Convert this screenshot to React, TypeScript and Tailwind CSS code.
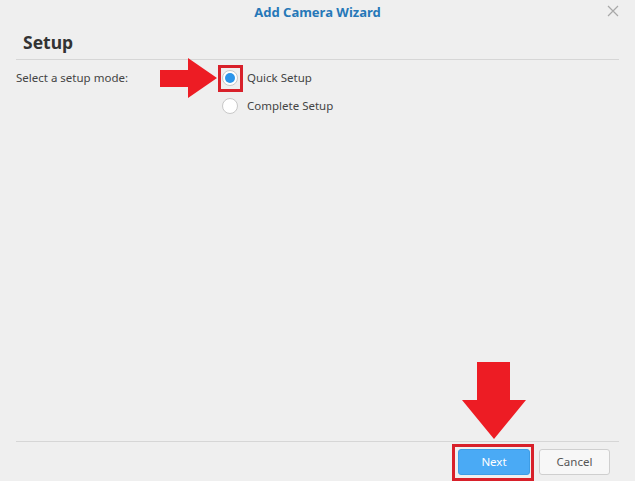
import React, { useState } from 'react';

const font = { fontFamily: '"Noto Sans", "Open Sans", sans-serif' };

// Red callout arrow pointing right (tip at the right edge)
const ArrowRight: React.FC = () => (
  <svg width="58" height="40" viewBox="0 0 58 40" className="absolute left-[160px] top-[58px]">
    <polygon points="0,12 28,12 28,0 57,20 28,40 28,29 0,29" fill="#ed1c24" />
  </svg>
);

// Red callout arrow pointing down (tip at the bottom)
const ArrowDown: React.FC = () => (
  <svg width="66" height="78" viewBox="0 0 66 78" className="absolute left-[461px] top-[362px]">
    <polygon points="16,0 49,0 49,38 65,38 33,77 1,38 16,38" fill="#ed1c24" />
  </svg>
);

const Radio: React.FC<{ checked: boolean; label: string; onClick: () => void }> = ({ checked, label, onClick }) => (
  <label className="flex items-center h-[28px] cursor-pointer" onClick={onClick}>
    <span className="w-[16px] h-[16px] rounded-full bg-white border border-[#c8c8c8] flex items-center justify-center">
      {checked && <span className="w-[10px] h-[10px] rounded-full bg-[#2b95ea]" />}
    </span>
    <span className="ml-[9px] text-[11.5px] text-[#444]">{label}</span>
  </label>
);

const App: React.FC = () => {
  const [mode, setMode] = useState<'quick' | 'complete'>('quick');

  return (
    <div className="relative w-[635px] h-[481px] bg-[#efefef] flex flex-col overflow-hidden" style={font}>
      {/* Window title */}
      <div className="h-[26px] flex items-center justify-center relative">
        <span className="text-[13px] font-bold text-[#2678b8]">Add Camera Wizard</span>
        <button className="absolute right-[16px] top-[5px] text-[#aaa]">
          <svg width="12" height="12" viewBox="0 0 12 12">
            <path d="M1 1 L11 11 M11 1 L1 11" stroke="#a8a8a8" strokeWidth="1.2" />
          </svg>
        </button>
      </div>

      {/* Step heading */}
      <div className="mx-[16px] h-[34px] border-b border-[#d6d6d6] flex items-center pl-[7px]">
        <span className="text-[17.5px] font-bold text-[#333]">Setup</span>
      </div>

      {/* Form */}
      <div className="flex-1 px-[16px] pt-[4px] flex">
        <div className="w-[206px] text-[11.5px] text-[#444] h-[28px] flex items-center">Select a setup mode:</div>
        <div className="flex flex-col">
          <Radio checked={mode === 'quick'} label="Quick Setup" onClick={() => setMode('quick')} />
          <Radio checked={mode === 'complete'} label="Complete Setup" onClick={() => setMode('complete')} />
        </div>
      </div>

      {/* Footer buttons */}
      <div className="mx-[16px] border-t border-[#d6d6d6] h-[40px] flex items-start justify-end gap-[9px] pt-[7px] pr-[9px]">
        <button className="w-[72px] h-[26px] rounded-[3px] bg-[#4aaaf5] border border-[#3d9de6] text-white text-[11.5px]">Next</button>
        <button className="w-[71px] h-[26px] rounded-[3px] bg-[#f7f7f7] border border-[#cfcfcf] text-[#555] text-[11.5px]">Cancel</button>
      </div>

      {/* Callouts */}
      <ArrowRight />
      <div className="absolute left-[218px] top-[65px] w-[25px] h-[27px] border-[3px] border-[#d8202a]" />
      <ArrowDown />
      <div className="absolute left-[452px] top-[444px] w-[82px] h-[37px] border-[3px] border-[#d8202a]" />
    </div>
  );
};

export default App;
